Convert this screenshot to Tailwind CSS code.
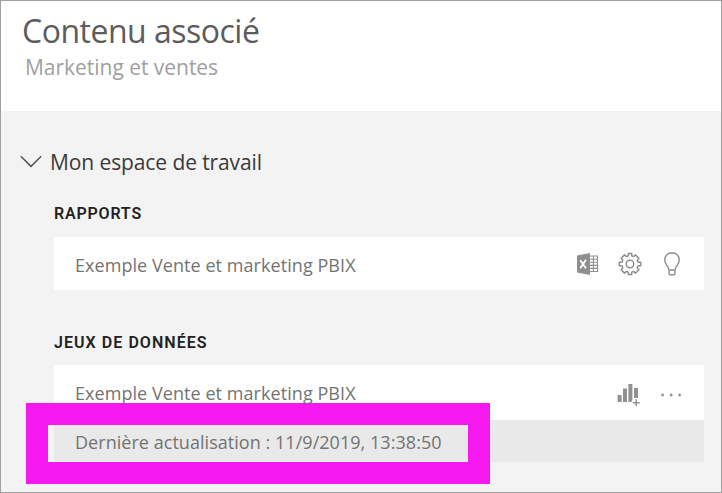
<!DOCTYPE html>
<html lang="fr">
<head>
<meta charset="utf-8">
<title>Contenu associé</title>
<script src="https://cdn.jsdelivr.net/npm/@tailwindcss/browser@4"></script>
</head>
<body class="overflow-hidden">
<main class="relative flex h-[493px] w-[722px] flex-col border border-[#a0a0a0] bg-[#f3f3f3] font-['Open_Sans','Noto_Sans',sans-serif] whitespace-nowrap">
  <header class="h-[110px] bg-white pt-[10px] pl-[21px]">
    <h1 class="h-[40px] text-[32px] leading-[40px] tracking-[-0.5px] text-[#5c5c5c]">Contenu associé</h1>
    <p class="h-[32px] pl-[3px] text-[21px] leading-[32px] tracking-[-0.03px] text-[#a0a0a0]">Marketing et ventes</p>
  </header>
  <section class="flex flex-col pr-[17px] pl-[53px]">
    <div class="-ml-[34px] mt-[35px] flex h-[32px] items-center">
      <svg class="mr-[8px]" width="22" height="14" viewBox="0 0 22 14" fill="none" stroke="#555" stroke-width="1.5"><path d="M0.8 1.2 11 11.4 21.2 1.2"/></svg>
      <h2 class="text-[21px] leading-[32px] tracking-[-0.1px] text-[#3a3a3a]">Mon espace de travail</h2>
    </div>
    <h3 class="mt-[26px] h-[20px] font-[Roboto] text-[16px] leading-[20px] font-semibold tracking-[0.8px] text-[#222]">RAPPORTS</h3>
    <div class="mt-[13px] flex h-[53px] items-center bg-white pl-[21px] text-[18px] tracking-[0.06px] text-[#737373]">
      <span class="mt-[4px]">Exemple Vente et marketing PBIX</span>
      <div class="mr-[23px] ml-auto flex items-center text-[#8f8f8f]">
        <svg class="-mr-px" width="23" height="22" viewBox="-1 0 23 22" fill="none"><path d="M0 2.4 13 0V22L0 19.4Z" fill="currentColor"/><path d="M3.3 7.2 8.9 15.2M8.9 6.8 3.3 15.2" stroke="#fff" stroke-width="1.8"/><path d="M13 3H20.5V18.5H13M13 6.2H20M13 9.3H20M13 12.4H20M13 15.4H20M16.4 3V18" stroke="currentColor" stroke-width="1.1"/></svg>
        <svg class="ml-[20px]" width="24" height="24" viewBox="0 0 24 24" fill="none" stroke="currentColor" stroke-width="1.5" stroke-linejoin="round"><circle cx="12" cy="12" r="3.8"/><path d="M10.3 1.5V3.8L8.4 4.6 6.5 2.9 3.1 6.2 4.8 8.2 4 10.2H1.3V13.8H4L4.8 15.8 3.1 17.8 6.5 21.1 8.4 19.4 10.3 20.2V22.5H13.7V20.2L15.6 19.4 17.5 21.1 20.9 17.8 19.2 15.8 20 13.8H22.7V10.2H20L19.2 8.2 20.9 6.2 17.5 2.9 15.6 4.6 13.7 3.8V1.5Z"/></svg>
        <svg class="ml-[21px]" width="18" height="24" viewBox="0 0 18 24" fill="none" stroke="currentColor" stroke-width="1.4"><path d="M6 18C6 14.5 1.7 12.4 1.7 8A7.3 7.3 0 0 1 16.3 8C16.3 12.4 12 14.5 12 18V21.5Q12 22.8 10.7 22.8H7.3Q6 22.8 6 21.5ZM6 18H12"/></svg>
      </div>
    </div>
    <h3 class="mt-[43px] h-[20px] font-[Roboto] text-[16px] leading-[20px] font-semibold tracking-[1.05px] text-[#222]">JEUX DE DONNÉES</h3>
    <div class="mt-[12px] flex h-[55px] items-center bg-white pl-[21px] text-[18px] tracking-[0.06px] text-[#737373]">
      <span class="relative z-10 mt-[2px]">Exemple Vente et marketing PBIX</span>
      <div class="mr-[21px] ml-auto mt-[5px] flex items-center text-[#919191]">
        <svg width="24" height="24" viewBox="0 0 24 24" fill="currentColor"><path d="M0.6 12H4.6V19H0.6ZM6 5.5H10V19H6ZM11.4 1H15.4V17L14.2 19H11.4ZM17 5H21V15H17ZM18.5 16.3H20V19H22.7V20.4H20V23H18.5V20.4H15.8V19H18.5Z"/></svg>
        <svg class="ml-[20px]" width="22" height="6" viewBox="0 0 22 6" fill="currentColor"><circle cx="1.6" cy="3" r="1.4"/><circle cx="10.2" cy="3" r="1.4"/><circle cx="18.6" cy="3" r="1.4"/></svg>
      </div>
    </div>
    <div class="flex h-[42px] items-center bg-[#e9e9e9] pl-[21px] text-[18px] tracking-[0.04px] text-[#737373]">
      <span class="mt-[3px]">Dernière actualisation : 11/9/2019, 13:38:50</span>
    </div>
  </section>
  <div class="absolute top-[402px] left-[25px] h-[81px] w-[464px] border-[22px] border-[#f519f0]"></div>
</main>
</body>
</html>
